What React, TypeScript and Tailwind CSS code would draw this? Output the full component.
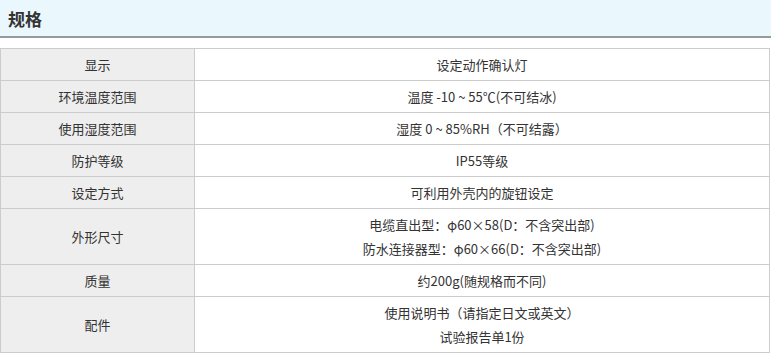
import React from "react";

const rows: { label: string; value: string[] }[] = [
  { label: "显示", value: ["设定动作确认灯"] },
  { label: "环境温度范围", value: ["温度 -10 ~ 55℃(不可结冰)"] },
  { label: "使用湿度范围", value: ["湿度 0 ~ 85%RH（不可结露）"] },
  { label: "防护等级", value: ["IP55等级"] },
  { label: "设定方式", value: ["可利用外壳内的旋钮设定"] },
  {
    label: "外形尺寸",
    value: ["电缆直出型：φ60×58(D：不含突出部)", "防水连接器型：φ60×66(D：不含突出部)"],
  },
  { label: "质量", value: ["约200g(随规格而不同)"] },
  { label: "配件", value: ["使用说明书（请指定日文或英文）", "试验报告单1份"] },
];

export default function App() {
  return (
    <div
      className="w-[771px] h-[354px] bg-white text-[#333] overflow-hidden"
      style={{ fontFamily: '"Noto Sans CJK SC", "Noto Sans", sans-serif' }}
    >
      <div className="h-[38px] bg-[#eaf7fc] border-b-2 border-[#999] flex items-center px-2">
        <h2 className="text-[17px] font-bold leading-none">规格</h2>
      </div>
      <table className="mt-[10px] w-[770px] border-collapse text-[13px] leading-6">
        <tbody>
          {rows.map((r) => (
            <tr key={r.label}>
              <td className="w-[194px] bg-[#eeeeee] border border-[#cccccc] text-center py-[3.5px]">
                {r.label}
              </td>
              <td className="border border-[#cccccc] text-center py-[3.5px]">
                {r.value.map((v) => (
                  <div key={v}>{v}</div>
                ))}
              </td>
            </tr>
          ))}
        </tbody>
      </table>
    </div>
  );
}
